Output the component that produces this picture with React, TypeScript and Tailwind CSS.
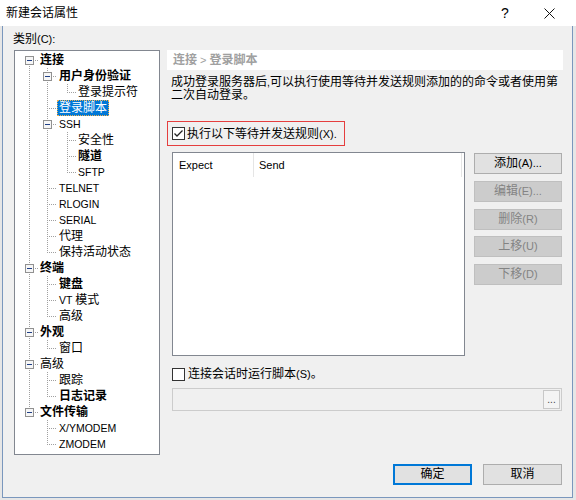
import React from 'react'

type Row = { t: string; l: 0 | 1 | 2; b?: boolean; box?: boolean; sel?: boolean }

const rows: Row[] = [
  { t: '连接', l: 0, b: true, box: true },
  { t: '用户身份验证', l: 1, b: true, box: true },
  { t: '登录提示符', l: 2 },
  { t: '登录脚本', l: 1, sel: true },
  { t: 'SSH', l: 1, box: true },
  { t: '安全性', l: 2 },
  { t: '隧道', l: 2, b: true },
  { t: 'SFTP', l: 2 },
  { t: 'TELNET', l: 1 },
  { t: 'RLOGIN', l: 1 },
  { t: 'SERIAL', l: 1 },
  { t: '代理', l: 1 },
  { t: '保持活动状态', l: 1 },
  { t: '终端', l: 0, b: true, box: true },
  { t: '键盘', l: 1, b: true },
  { t: 'VT 模式', l: 1 },
  { t: '高级', l: 1 },
  { t: '外观', l: 0, b: true, box: true },
  { t: '窗口', l: 1 },
  { t: '高级', l: 0, box: true },
  { t: '跟踪', l: 1 },
  { t: '日志记录', l: 1, b: true },
  { t: '文件传输', l: 0, b: true, box: true },
  { t: 'X/YMODEM', l: 1 },
  { t: 'ZMODEM', l: 1 },
]

// connector x and label left, per level (relative to tree inner edge)
const lineX = [14, 32, 52]
const labelX = [23, 42, 61]
const indent = ['pl-[23px]', 'pl-[42px]', 'pl-[61px]']
const ROW = 16
const mid = (i: number) => 1 + ROW * i + 8

function Txt({ s, latin = 'text-[10.5px]' }: { s: string; latin?: string }) {
  const parts = s.split(/([\x20-\x7e]+)/).filter(Boolean)
  return (
    <>
      {parts.map((p, i) =>
        /^[\x20-\x7e]+$/.test(p) ? (
          <span key={i} className={latin}>
            {p}
          </span>
        ) : (
          <span key={i}>{p}</span>
        ),
      )}
    </>
  )
}

function TreeLines() {
  const dots = { stroke: '#a0a0a0', strokeDasharray: '1 1' }
  const els: React.ReactNode[] = []
  const roots = rows.map((r, i) => (r.l === 0 ? i : -1)).filter(i => i >= 0)
  els.push(
    <line key="root" x1={lineX[0] + 0.5} x2={lineX[0] + 0.5} y1={mid(roots[0])} y2={mid(roots[roots.length - 1]) + 1} {...dots} />,
  )
  rows.forEach((r, i) => {
    if (r.box) {
      let last = -1
      for (let j = i + 1; j < rows.length && rows[j].l > r.l; j++) if (rows[j].l === r.l + 1) last = j
      if (last > 0) {
        const x = lineX[r.l + 1] + 0.5
        els.push(<line key={'v' + i} x1={x} x2={x} y1={1 + ROW * (i + 1)} y2={mid(last) + 1} {...dots} />)
      }
    }
    const y = mid(i) + 0.5
    els.push(<line key={'h' + i} x1={lineX[r.l]} x2={labelX[r.l]} y1={y} y2={y} {...dots} />)
  })
  rows.forEach((r, i) => {
    if (!r.box) return
    const x = lineX[r.l]
    const c = mid(i)
    els.push(
      <g key={'b' + i}>
        <rect x={x - 4 + 0.5} y={c - 4 + 0.5} width={8} height={8} fill="#f6f6f6" stroke="#919191" />
        <line x1={x - 2} x2={x + 3} y1={c + 0.5} y2={c + 0.5} stroke="#1f3f86" />
      </g>,
    )
  })
  return (
    <svg className="absolute inset-0 pointer-events-none" width={144} height={403}>
      {els}
    </svg>
  )
}

function Tree() {
  return (
    <div className="relative w-[146px] h-[405px] mt-[3px] border border-[#828790] bg-white overflow-hidden">
      <TreeLines />
      <div className="relative pt-[1px]">
        {rows.map((r, i) => (
          <div key={i} className={`h-[16px] flex items-center ${indent[r.l]}`}>
            <span
              className={`h-[16px] leading-[14px] px-[1px] whitespace-nowrap border ${
                r.sel ? 'bg-[#0078d7] text-white border-dotted border-[#f0b050]' : 'border-transparent text-black'
              } ${r.b ? 'font-bold' : ''}`}
            >
              <Txt s={r.t} />
            </span>
          </div>
        ))}
      </div>
    </div>
  )
}

function CheckBox({ checked }: { checked?: boolean }) {
  return (
    <span className="w-[13px] h-[13px] border border-[#333333] bg-white flex items-center justify-center shrink-0">
      {checked && (
        <svg width="11" height="11" viewBox="0 0 11 11">
          <path d="M1.5 5.5 L4 8 L9.5 2.5" fill="none" stroke="#222" strokeWidth="1.3" />
        </svg>
      )}
    </span>
  )
}

function SideButton({ label, disabled }: { label: string; disabled?: boolean }) {
  return (
    <div
      className={`w-[88px] h-[21px] border flex items-center justify-center leading-[19px] ${
        disabled ? 'bg-[#cccccc] border-[#bfbfbf] text-[#838383]' : 'bg-[#e1e1e1] border-[#adadad] text-black'
      }`}
    >
      <Txt s={label} latin="text-[11px]" />
    </div>
  )
}

export default function App() {
  return (
    <div className="w-[576px] h-[500px] bg-[#e6e6e6] overflow-hidden text-[12px] text-black font-['Liberation_Sans','Noto_Sans_CJK_SC',sans-serif]">
      <div className="h-[26px] bg-white flex items-center">
        <span className="pl-[6px] leading-[16px]">新建会话属性</span>
        <span className="ml-auto w-[10px] text-center text-[14px] leading-[16px]">?</span>
        <svg className="ml-[34px] mr-[21px]" width="11" height="11" viewBox="0 0 11 11">
          <path d="M0.5 0.5 L10.5 10.5 M10.5 0.5 L0.5 10.5" stroke="#111" strokeWidth="1" />
        </svg>
      </div>

      <div className="ml-[2px] mr-[3px] h-[472px] border-x border-b border-[#7a97bd] bg-[#f0f0f0] flex pl-[11px] pt-[5px]">
        <div className="w-[146px] shrink-0">
          <div className="h-[16px] leading-[16px] -ml-[1px]">
            <Txt s="类别(C):" latin="text-[11px]" />
          </div>
          <Tree />
        </div>

        <div className="ml-[7px] mt-[19px] w-[396px] flex flex-col">
          <div className="h-[20px] bg-white pl-[6px] leading-[20px] font-bold text-[#a0a0a0]">
            <Txt s="连接 > 登录脚本" latin="text-[11px] font-normal" />
          </div>

          <div className="mt-[6px] pl-[4px] leading-[13px] whitespace-nowrap">
            <div>
              <Txt s="成功登录服务器后,可以执行使用等待并发送规则添加的的命令或者使用第" />
            </div>
            <div>二次自动登录。</div>
          </div>

          <div className="mt-[19px] w-[178px] h-[25px] border border-[#e53e3e] flex items-center pl-[4px]">
            <CheckBox checked />
            <span className="ml-[2px] leading-[14px] whitespace-nowrap">
              <Txt s="执行以下等待并发送规则(X)." latin="text-[11px]" />
            </span>
          </div>

          <div className="mt-[6px] flex">
            <div className="ml-[5px] w-[293px] h-[204px] border border-[#828790] bg-white">
              <div className="h-[24px] flex">
                <div className="w-[81px] h-full border-r border-[#e5e5e5] pl-[6px] flex items-center text-[11px]">
                  Expect
                </div>
                <div className="w-[208px] h-full border-r border-[#e5e5e5] pl-[5px] flex items-center text-[11px]">
                  Send
                </div>
              </div>
            </div>
            <div className="ml-[9px] pt-[1px] flex flex-col">
              <SideButton label="添加(A)..." />
              <div className="mt-[7px]">
                <SideButton label="编辑(E)..." disabled />
              </div>
              <div className="mt-[7px]">
                <SideButton label="删除(R)" disabled />
              </div>
              <div className="mt-[6px]">
                <SideButton label="上移(U)" disabled />
              </div>
              <div className="mt-[7px]">
                <SideButton label="下移(D)" disabled />
              </div>
            </div>
          </div>

          <div className="mt-[10px] h-[16px] flex items-center pl-[5px]">
            <CheckBox />
            <span className="ml-[3px] leading-[14px] whitespace-nowrap">
              <Txt s="连接会话时运行脚本(S)。" latin="text-[11px]" />
            </span>
          </div>

          <div className="mt-[6px] ml-[5px] w-[390px] h-[23px] border border-[#cccccc] bg-[#f0f0f0] flex justify-end items-center pr-[1px]">
            <div className="w-[17px] h-[19px] border border-[#c8c8c8] bg-[#f4f4f4] flex items-end justify-center pb-[3px] text-[10px] leading-[10px] text-[#444]">
              ...
            </div>
          </div>

          <div className="mt-[53px] mr-[1px] flex justify-end gap-[11px]">
            <div className="w-[79px] h-[21px] border-2 border-[#0078d7] bg-[#e1e1e1] flex items-center justify-center leading-[17px]">
              确定
            </div>
            <div className="w-[79px] h-[21px] border border-[#adadad] bg-[#e1e1e1] flex items-center justify-center leading-[19px]">
              取消
            </div>
          </div>
        </div>
      </div>
    </div>
  )
}
